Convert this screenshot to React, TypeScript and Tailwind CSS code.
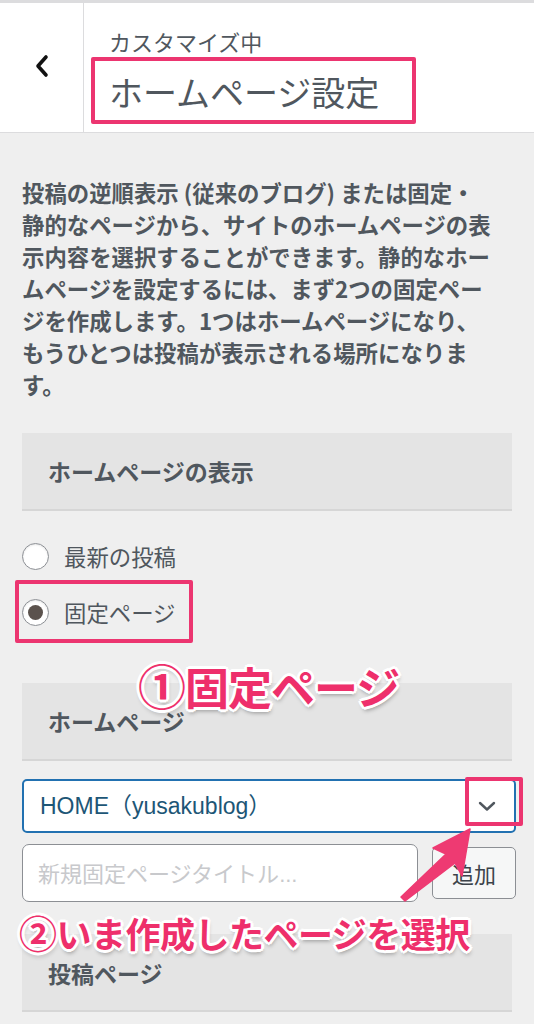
import React from "react";

const JP = { fontFamily: '"Noto Sans CJK JP", "Noto Sans", sans-serif' };
const LAT = { fontFamily: '"Liberation Sans", "Noto Sans CJK JP", sans-serif' };

function Section({ title }: { title: string }) {
  return (
    <div className="mx-[22px] h-[78px] bg-[#e4e4e4] border-b-2 border-[#d6d6d6] flex items-center pl-[26px]">
      <span className="text-[23px] font-bold text-[#50575e] leading-none">{title}</span>
    </div>
  );
}

function Radio({ label, checked }: { label: string; checked?: boolean }) {
  return (
    <div className="h-[56px] flex items-center pl-[22px] gap-[15px]">
      <span className="w-[27px] h-[27px] rounded-full border border-[#8c8f94] bg-white flex items-center justify-center shadow-[inset_0_1px_2px_rgba(0,0,0,0.1)]">
        {checked && <span className="w-[15px] h-[15px] rounded-full bg-[#5b524d]" />}
      </span>
      <span className="text-[22.4px] text-[#50575e] leading-none">{label}</span>
    </div>
  );
}

const outline =
  "[text-shadow:2px_0_0_#fff,-2px_0_0_#fff,0_2px_0_#fff,0_-2px_0_#fff,2px_2px_0_#fff,-2px_-2px_0_#fff,2px_-2px_0_#fff,-2px_2px_0_#fff,3px_0_0_#fff,-3px_0_0_#fff,0_3px_0_#fff,0_-3px_0_#fff,1px_4px_4px_rgba(0,0,0,0.35)]";

export default function App() {
  return (
    <div className="relative w-[534px] h-[1024px] overflow-hidden bg-[#efefef]" style={JP}>
      {/* Header */}
      <div className="h-[133px] bg-white border-t-[3px] border-b border-[#dcdcde] flex">
        <div className="w-[84px] border-r border-[#dcdcde] flex items-center justify-center pb-[4px]">
          <svg width="16" height="24" viewBox="0 0 16 24">
            <polyline points="12,3 4,12 12,21" fill="none" stroke="#111" strokeWidth="3.6" strokeLinecap="round" strokeLinejoin="round" />
          </svg>
        </div>
        <div className="flex flex-col pt-[25px]">
          <div className="pl-[25px] text-[22px] leading-[26px] text-[#50575e]">カスタマイズ中</div>
          <div className="ml-[7px] mt-[3px] w-[325px] h-[67px] border-4 border-[#ec3570] rounded-[2px] pl-[14px] flex items-center">
            <span className="text-[34px] leading-none text-[#50575e] pt-[2px]">ホームページ設定</span>
          </div>
        </div>
      </div>

      {/* Description */}
      <div className="pt-[43px] px-[22px] text-[22.4px] leading-[32px] font-bold text-[#50575e] whitespace-nowrap">
        <div>投稿の逆順表示 (従来のブログ) または固定・</div>
        <div>静的なページから、サイトのホームページの表</div>
        <div>示内容を選択することができます。静的なホー</div>
        <div>ムページを設定するには、まず2つの固定ペー</div>
        <div>ジを作成します。1つはホームページになり、</div>
        <div>もうひとつは投稿が表示される場所になりま</div>
        <div>す。</div>
      </div>

      <div className="mt-[33px]">
        <Section title="ホームページの表示" />
      </div>

      <div className="mt-[17px]">
        <Radio label="最新の投稿" />
        <div className="relative">
          <Radio label="固定ページ" checked />
          <div className="absolute left-[15px] top-[-4px] w-[178px] h-[63px] border-4 border-[#ec3570] rounded-[2px]" />
        </div>
      </div>

      <div className="mt-[43px]">
        <Section title="ホームページ" />
      </div>

      {/* Select */}
      <div className="mt-[18px] ml-[22px] w-[494px] h-[54px] rounded-[5px] border-2 border-[#2271b1] bg-white flex items-center justify-between pl-[16px] pr-[18px]">
        <span className="text-[23px] text-[#1d5676] leading-none" style={LAT}>HOME（yusakublog）</span>
        <svg width="18" height="12" viewBox="0 0 18 12">
          <polyline points="2,3 9,9.5 16,3" fill="none" stroke="#50575e" strokeWidth="2.4" strokeLinecap="round" strokeLinejoin="round" />
        </svg>
      </div>

      {/* Input + button */}
      <div className="mt-[11px] ml-[22px] flex items-center gap-[14px]">
        <div className="w-[396px] h-[58px] rounded-[7px] border border-[#8c8f94] bg-white flex items-center pl-[15px]">
          <span className="text-[22px] text-[#c8c9cc] leading-none">新規固定ページタイトル<span style={LAT}>...</span></span>
        </div>
        <div className="w-[84px] h-[52px] rounded-[5px] border border-[#8c8f94] bg-[#f6f7f7] flex items-center justify-center">
          <span className="text-[22px] text-[#3c434a] leading-none">追加</span>
        </div>
      </div>

      <div className="mt-[32px]">
        <div className="mx-[22px] h-[78px] bg-[#e4e4e4] border-b-2 border-[#d6d6d6] flex items-center pl-[26px] pt-[2px]">
          <span className="text-[23px] font-bold text-[#50575e] leading-none">投稿ページ</span>
        </div>
      </div>

      {/* Annotations */}
      <div className="absolute left-[465px] top-[777px] w-[58px] h-[49px] border-4 border-[#ec3570] rounded-[2px]" />

      <svg className="absolute left-0 top-0 pointer-events-none" width="534" height="1024" viewBox="0 0 534 1024">
        <polygon
          points="470,829 433,848 446,854 401,897 405,901 455,863 462,876"
          fill="#ee3a72"
          stroke="#ee3a72"
          strokeWidth="1.5"
          strokeLinejoin="round"
        />
      </svg>

      <div
        className={`absolute left-[138px] top-[657px] text-[44px] leading-[54px] font-bold text-[#ee2f6b] whitespace-nowrap tracking-[-1px] ${outline}`}
      >
        <span className="text-[48px]">①</span>固定ページ
      </div>
      <div
        className={`absolute left-[19px] top-[910px] text-[35px] leading-[44px] font-bold text-[#ee2f6b] whitespace-nowrap tracking-[-0.5px] ${outline}`}
      >
        <span className="text-[38px]">②</span>いま作成したページを選択
      </div>
    </div>
  );
}
